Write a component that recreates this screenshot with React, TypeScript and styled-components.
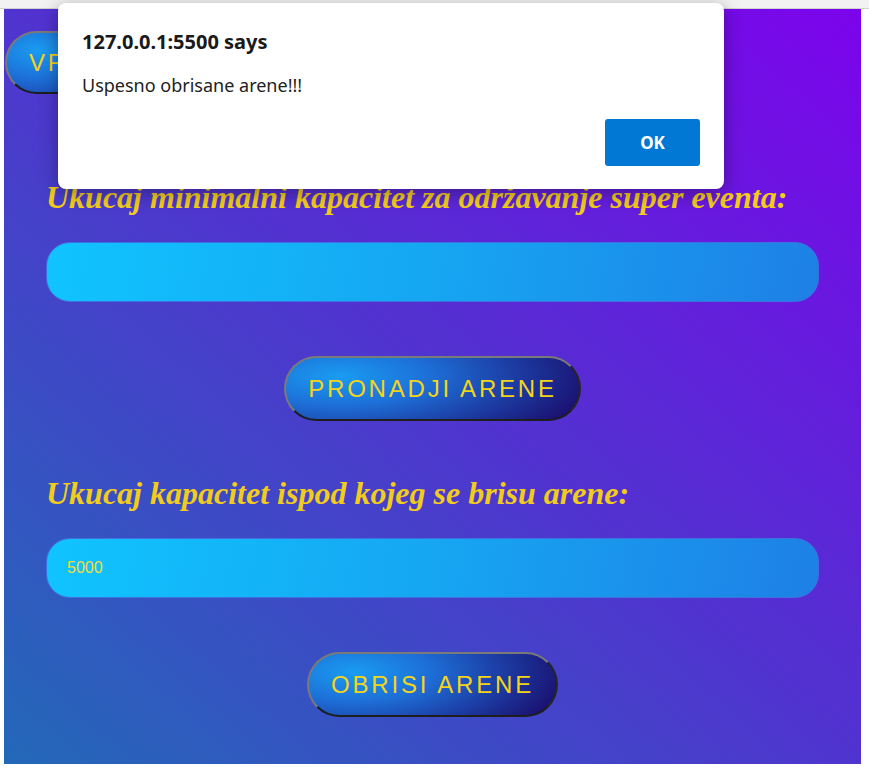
import React from "react";
import styled, { createGlobalStyle } from "styled-components";

const Global = createGlobalStyle`
  html, body { margin: 0; padding: 0; background: #ffffff; }
  * { box-sizing: border-box; }
`;

const Page = styled.div`
  position: relative;
  width: 869px;
  height: 768px;
  overflow: hidden;
  display: flex;
  flex-direction: column;
`;

const TopStrip = styled.div`
  height: 9px;
  background: #f2f2f2;
  border-bottom: 1px solid #cfd3cf;
`;

const Stage = styled.main`
  margin-left: 4px;
  width: 857px;
  height: 755px;
  background: linear-gradient(to top right, #2369b8 0%, #5034cf 50%, #7c03ec 100%);
  display: flex;
  flex-direction: column;
  padding-top: 22px;
`;

const NavRow = styled.div`
  padding-left: 1px;
  display: flex;
`;

const PillButton = styled.button<{ $pad?: number }>`
  height: 65px;
  padding: 0 ${(p) => p.$pad ?? 22}px;
  border-radius: 40px;
  border: 2px solid;
  border-color: #7a7a7a #262626 #1e1e1e #7a7a7a;
  background: radial-gradient(ellipse 90% 140% at 18% 30%, #1a9cf2 0%, #1d6ed6 35%, #1c3fa6 65%, #1a0c6b 100%);
  color: #f4d41a;
  font-family: "Liberation Sans", Arial, sans-serif;
  font-size: 24px;
  letter-spacing: 2.8px;
  cursor: pointer;
`;

const NavButton = styled(PillButton)`
  height: 63px;
`;

const Form = styled.section`
  display: flex;
  flex-direction: column;
  padding: 0 42px;
`;

const Heading = styled.h2<{ $top: number }>`
  margin: ${(p) => p.$top}px 0 0 0;
  font-family: "Liberation Serif", "Times New Roman", serif;
  font-style: italic;
  font-weight: bold;
  font-size: 32px;
  line-height: 36px;
  color: #f2cc1a;
`;

const Field = styled.input`
  margin-top: 27px;
  height: 60px;
  width: 100%;
  border-radius: 24px;
  border: 1px solid #3f6fe0;
  background: linear-gradient(100deg, #10c4ff 0%, #16a6f2 50%, #1e80e6 100%);
  padding: 0 20px;
  color: #f5dc3a;
  font-family: "Liberation Sans", Arial, sans-serif;
  font-size: 16px;
  outline: none;
`;

const ButtonRow = styled.div`
  display: flex;
  justify-content: center;
  margin-top: 54px;
`;

const Dialog = styled.div`
  position: absolute;
  left: 58px;
  top: 3px;
  width: 666px;
  height: 186px;
  background: #ffffff;
  border-radius: 8px;
  box-shadow: 0 4px 18px rgba(0, 0, 0, 0.35);
  padding: 26px 24px 23px 24px;
  display: flex;
  flex-direction: column;
  font-family: "Noto Sans", "Open Sans", sans-serif;
  color: #1a1a1a;
`;

const DialogTitle = styled.div`
  font-size: 20px;
  font-weight: bold;
  line-height: 26px;
`;

const DialogMessage = styled.div`
  margin-top: 19px;
  font-size: 18px;
  line-height: 22px;
  color: #222222;
`;

const DialogActions = styled.div`
  margin-top: auto;
  display: flex;
  justify-content: flex-end;
`;

const OkButton = styled.button`
  width: 95px;
  height: 47px;
  border: none;
  border-radius: 3px;
  background: #0078d4;
  color: #ffffff;
  font-family: "Noto Sans", "Open Sans", sans-serif;
  font-weight: bold;
  font-size: 17px;
`;

export default function App() {
  return (
    <>
      <Global />
      <Page>
        <TopStrip />
        <Stage>
          <NavRow>
            <NavButton $pad={22}>VRATI SE</NavButton>
          </NavRow>
          <Form>
            <Heading $top={85}>Ukucaj minimalni kapacitet za održavanje super eventa:</Heading>
            <Field type="number" />
            <ButtonRow>
              <PillButton>PRONADJI ARENE</PillButton>
            </ButtonRow>
            <Heading $top={54}>Ukucaj kapacitet ispod kojeg se brisu arene:</Heading>
            <Field type="text" defaultValue="5000" />
            <ButtonRow>
              <PillButton>OBRISI ARENE</PillButton>
            </ButtonRow>
          </Form>
        </Stage>
        <Dialog role="alertdialog">
          <DialogTitle>127.0.0.1:5500 says</DialogTitle>
          <DialogMessage>Uspesno obrisane arene!!!</DialogMessage>
          <DialogActions>
            <OkButton>OK</OkButton>
          </DialogActions>
        </Dialog>
      </Page>
    </>
  );
}
